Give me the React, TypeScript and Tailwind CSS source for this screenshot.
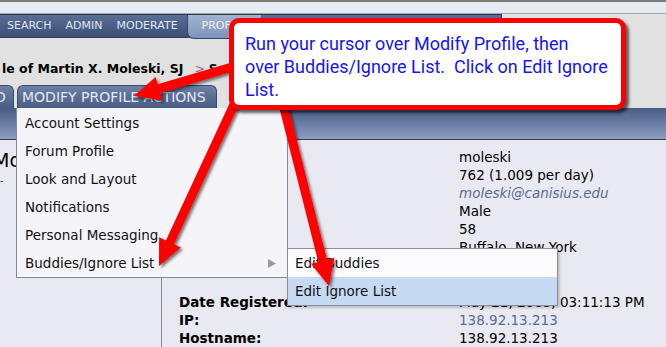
import React from "react";

type Pt = [number, number];

const arrows: { from: Pt; to: Pt }[] = [
  { from: [232, 67], to: [134, 96] },
  { from: [238, 96], to: [159, 266] },
  { from: [281, 96], to: [329, 286] },
];

function arrowPoints(from: Pt, to: Pt, w = 9, headLen = 26, headW = 12) {
  const dx = to[0] - from[0];
  const dy = to[1] - from[1];
  const len = Math.hypot(dx, dy);
  const ux = dx / len;
  const uy = dy / len;
  const nx = -uy;
  const ny = ux;
  const bx = to[0] - ux * headLen;
  const by = to[1] - uy * headLen;
  const pts: Pt[] = [
    [from[0] + (nx * w) / 2, from[1] + (ny * w) / 2],
    [bx + (nx * w) / 2, by + (ny * w) / 2],
    [bx + nx * headW, by + ny * headW],
    to,
    [bx - nx * headW, by - ny * headW],
    [bx - (nx * w) / 2, by - (ny * w) / 2],
    [from[0] - (nx * w) / 2, from[1] - (ny * w) / 2],
  ];
  return pts.map(p => p.join(",")).join(" ");
}

const menu = ["Account Settings", "Forum Profile", "Look and Layout", "Notifications", "Personal Messaging"];

const details = [
  { label: "Username:", value: "moleski" },
  { label: "Posts:", value: "762 (1.009 per day)" },
  { label: "Email:", value: "moleski@canisius.edu", link: true },
  { label: "Gender:", value: "Male" },
  { label: "Age:", value: "58" },
  { label: "Location:", value: "Buffalo, New York" },
];

const stats = [
  { label: "Date Registered:", value: "May 21, 2009, 03:11:13 PM" },
  { label: "IP:", value: "138.92.13.213", link: true },
  { label: "Hostname:", value: "138.92.13.213" },
];

export default function App() {
  return (
    <div className="relative h-[347px] w-[666px] overflow-hidden bg-[#e1e1e1] font-['DejaVu_Sans',sans-serif] text-black">
      <div className="h-[2px] bg-[#7d7d7d]" />
      <div className="h-[12px] border-b border-[#a5a5a5] bg-[#e6ebf2]" />

      {/* main menu */}
      <div className="flex h-[24px] w-[502px] border-y border-r border-[#2c3a58] bg-gradient-to-b from-[#5b6e95] to-[#3b4e76] text-[11px] text-[#dfe7f3]">
        {["SEARCH", "ADMIN", "MODERATE"].map(m => (
          <span key={m} className="flex items-center px-[7px]">{m}</span>
        ))}
        <span className="ml-[2px] flex h-[24px] items-center rounded-bl-[7px] border-b border-l border-[#34446a] bg-gradient-to-b from-[#a2b3d2] to-[#7e93b8] px-[14px] text-[#eef3fa]">
          PROFILE
        </span>
      </div>

      {/* linktree */}
      <div className="h-[46px] whitespace-nowrap pl-[2px] pt-[23px] text-[12.5px] leading-[16px]">
        <span className="font-bold">le of Martin X. Moleski, SJ</span>
        <span className="pl-[11px] pr-[4px] text-[#777]">&gt;</span>
        <span className="font-bold">Summary</span>
      </div>

      {/* tabs */}
      <div className="flex h-[24px] items-end">
        <div className="flex h-[23px] w-[14px] items-center overflow-hidden rounded-tr-[6px] border-t border-r border-[#3a4a6c] bg-gradient-to-b from-[#6c80a7] to-[#4a5d85] text-[14px] text-[#e3e9f3]">
          <span className="ml-[-5px]">D</span>
        </div>
        <div className="ml-[3px] flex h-[23px] w-[200px] items-center rounded-t-[6px] border-x border-t border-[#3a4a6c] bg-gradient-to-b from-[#6c80a7] to-[#4a5d85] pl-[4px] text-[14px] text-[#e3e9f3]">
          MODIFY PROFILE ACTIONS
        </div>
      </div>

      {/* category bar */}
      <div className="h-[32px] border-b border-[#2f3f60] bg-gradient-to-b from-[#485c85] to-[#8e9ec1]" />

      {/* profile content */}
      <div className="flex h-[207px] bg-[#e9e9f1]">
        <div className="w-[162px] shrink-0 overflow-hidden border-r border-[#8a8a9a] pt-[8px]">
          <div className="ml-[-7px] whitespace-nowrap text-[19px] leading-[24px]">Moleski</div>
          <div className="mt-[4px] text-[9px] leading-[10px]">-</div>
        </div>
        <div className="flex-1 pl-[17px] pt-[8px] text-[13.5px] leading-[18px]">
          {details.map(d => (
            <div key={d.label} className="flex">
              <span className="w-[280px] shrink-0 font-bold">{d.label}</span>
              <span className={d.link ? "italic text-[#5a6b94]" : ""}>{d.value}</span>
            </div>
          ))}
          <div className="mt-[37px]">
            {stats.map(s => (
              <div key={s.label} className="flex">
                <span className="w-[280px] shrink-0 font-bold">{s.label}</span>
                <span className={s.link ? "text-[#5a6b94]" : ""}>{s.value}</span>
              </div>
            ))}
          </div>
        </div>
      </div>

      {/* dropdown menu */}
      <div className="absolute left-[16px] top-[108px] w-[272px] border-x border-b border-[#828a9a] bg-[#f4f4f9] pt-[1px] text-[13.5px] text-[#111]">
        {menu.map(m => (
          <div key={m} className="flex h-[28px] items-center pl-[8px]">{m}</div>
        ))}
        <div className="flex h-[28px] items-center justify-between pl-[8px] pr-[11px]">
          <span>Buddies/Ignore List</span>
          <svg width="8" height="9" viewBox="0 0 8 9"><polygon points="0,0 8,4.5 0,9" fill="#9a9a9a" /></svg>
        </div>
      </div>

      {/* submenu */}
      <div className="absolute left-[287px] top-[248px] w-[271px] border border-[#8c8c96] bg-[#fbfbfd] text-[13.5px] text-[#111] shadow-[2px_2px_2px_rgba(0,0,0,0.18)]">
        <div className="flex h-[28px] items-center pl-[7px]">Edit Buddies</div>
        <div className="flex h-[28px] items-center bg-[#c6daf3] pl-[7px]">Edit Ignore List</div>
      </div>

      {/* annotation arrows */}
      <svg className="pointer-events-none absolute left-0 top-0" width="666" height="347">
        <defs>
          <filter id="sh" x="-20%" y="-20%" width="140%" height="140%">
            <feDropShadow dx="2" dy="2" stdDeviation="1.5" floodColor="#000" floodOpacity="0.55" />
          </filter>
        </defs>
        {arrows.map((a, i) => (
          <polygon key={i} points={arrowPoints(a.from, a.to)} fill="#ff0000" filter="url(#sh)" />
        ))}
      </svg>

      {/* callout */}
      <div className="absolute left-[229px] top-[18px] h-[92px] w-[397px] rounded-[10px] border-[5px] border-[#ff0000] bg-white pl-[11px] pt-[9px] font-['Roboto',sans-serif] text-[18px] leading-[23px] text-[#1414f5] shadow-[3px_3px_3px_rgba(0,0,0,0.6)]">
        Run your cursor over Modify Profile, then
        <br />
        over Buddies/Ignore List.&nbsp; Click on Edit Ignore
        <br />
        List.
      </div>
    </div>
  );
}
